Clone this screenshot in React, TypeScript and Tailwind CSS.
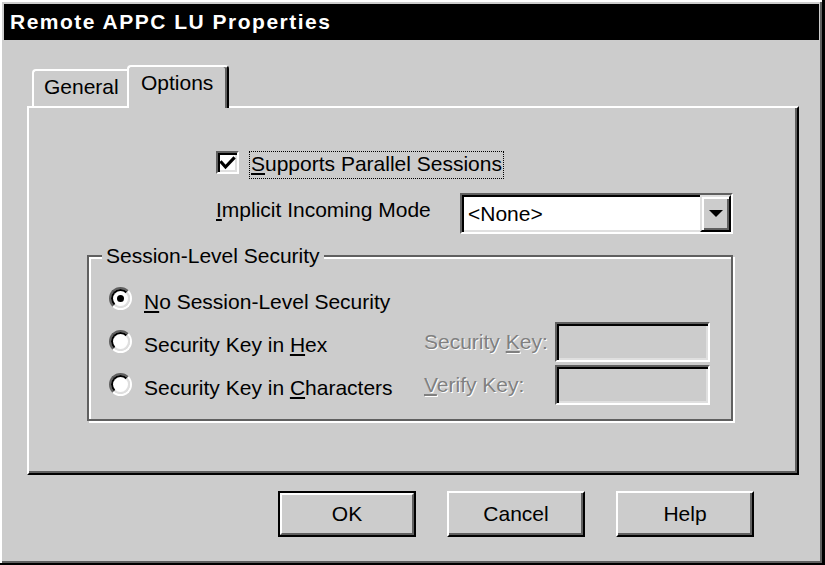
import React from "react";

const sunken =
  "border-2 border-t-[#606060] border-l-[#606060] border-b-white border-r-white shadow-[inset_2px_2px_0_#000,inset_-2px_-2px_0_#dfdfdf]";

function Radio({ checked }: { checked?: boolean }) {
  return (
    <div className="w-[23px] h-[23px] shrink-0 rounded-full border-2 border-t-[#606060] border-l-[#606060] border-b-white border-r-white">
      <div className="w-full h-full rounded-full bg-white border-2 border-t-black border-l-black border-b-[#dfdfdf] border-r-[#dfdfdf] flex items-center justify-center">
        {checked && <div className="w-[7px] h-[7px] rounded-full bg-black" />}
      </div>
    </div>
  );
}

function KeyField({ label, u, rest }: { label?: string; u: string; rest: string }) {
  return (
    <div className="flex items-center">
      <div className="w-[131px] text-[#808080] [text-shadow:1px_1px_0_#fff] leading-[24px]">
        {label}
        <u>{u}</u>
        {rest}
      </div>
      <div className={`w-[155px] h-[40px] bg-[#cccccc] ${sunken}`} />
    </div>
  );
}

function PushButton({ children, isDefault }: { children: React.ReactNode; isDefault?: boolean }) {
  if (isDefault) {
    return (
      <div className="w-[138px] h-[46px] border-2 border-black">
        <div className="w-full h-full border-2 border-t-white border-l-white border-b-[#606060] border-r-[#606060] flex items-center justify-center">
          {children}
        </div>
      </div>
    );
  }
  return (
    <div className="w-[138px] h-[46px] border-2 border-t-white border-l-white border-b-black border-r-black shadow-[inset_-2px_-2px_0_#606060] flex items-center justify-center">
      {children}
    </div>
  );
}

export default function App() {
  return (
    <div className="flex flex-col w-[825px] h-[565px] bg-[#cccccc] pt-[4px] pl-[4px] pr-[6px] pb-[4px] shadow-[inset_-3px_-2px_0_#000,inset_2px_2px_0_#fff,inset_-5px_-4px_0_#606060] text-black text-[21px] [font-family:'Liberation_Sans',Arial,sans-serif] select-none">
      {/* Title bar */}
      <div className="h-[36px] shrink-0 bg-black text-white font-bold tracking-[1.5px] pl-[6px] flex items-center">
        Remote APPC LU Properties
      </div>

      <div className="flex flex-col pl-[23px] pt-[25px]">
        {/* Tabs */}
        <div className="flex items-end h-[43px] pl-[5px] -mb-[2px] relative z-10">
          <div className="h-[37px] mb-[2px] w-[95px] border-l-2 border-t-2 border-white rounded-tl-[4px] pl-[10px] pt-[4px] leading-[24px]">
            General
          </div>
          <div className="h-[43px] w-[102px] bg-[#cccccc] border-l-2 border-t-2 border-white border-r-2 border-r-black rounded-t-[4px] shadow-[inset_-2px_0_0_#606060] pl-[12px] pt-[4px] leading-[24px]">
            Options
          </div>
        </div>

        {/* Panel */}
        <div className="w-[772px] h-[369px] border-2 border-t-white border-l-white border-b-black border-r-black shadow-[inset_-2px_-2px_0_#606060] flex flex-col">
          <div className="flex items-start mt-[43px] ml-[187px]">
            <div className="w-[23px] h-[23px] bg-white border-2 border-t-[#606060] border-l-[#606060] border-b-white border-r-white shadow-[inset_2px_2px_0_#000,inset_-2px_-2px_0_#dfdfdf]">
              <svg width="19" height="19" viewBox="0 0 19 19" className="block">
                <polyline points="3.5,9.5 7.5,14 15.5,5.5" fill="none" stroke="#000" strokeWidth="3.2" strokeLinecap="square" />
              </svg>
            </div>
            <div className="ml-[10px] h-[28px] border border-dotted border-black pl-[1px] pr-[1px] leading-[24px]">
              <u>S</u>upports Parallel Sessions
            </div>
          </div>

          <div className="flex items-start mt-[14px] ml-[187px]">
            <div className="w-[244px] mt-[5px] leading-[24px]">
              <u>I</u>mplicit Incoming Mode
            </div>
            <div className={`w-[273px] h-[41px] bg-white flex ${sunken}`}>
              <div className="flex-1 flex items-center pl-[6px] pt-[1px] leading-[24px]">&lt;None&gt;</div>
              <div className="w-[31px] h-full bg-[#cccccc] border-2 border-t-[#dfdfdf] border-l-[#dfdfdf] border-b-black border-r-black shadow-[inset_2px_2px_0_#fff,inset_-2px_-2px_0_#606060] flex items-center justify-center">
                <svg width="14" height="7" viewBox="0 0 14 7" className="block">
                  <polygon points="0,0 14,0 7,7" fill="#000" />
                </svg>
              </div>
            </div>
          </div>

          {/* Group box */}
          <div className="relative mt-[21px] ml-[58px] w-[646px] h-[166px] border-2 border-[#606060] shadow-[inset_2px_2px_0_#fff,2px_2px_0_#fff] pt-[20px] pl-[20px]">
            <div className="absolute -top-[13px] left-[13px] px-[4px] bg-[#cccccc] leading-[24px]">
              Session-Level Security
            </div>
            <div className="flex items-center h-[43px]">
              <Radio checked />
              <div className="ml-[12px] mt-[6px] leading-[24px]">
                <u>N</u>o Session-Level Security
              </div>
            </div>
            <div className="flex items-center h-[43px]">
              <Radio />
              <div className="ml-[12px] mt-[6px] w-[280px] leading-[24px]">
                Security Key in <u>H</u>ex
              </div>
              <KeyField label="Security " u="K" rest="ey:" />
            </div>
            <div className="flex items-center h-[43px]">
              <Radio />
              <div className="ml-[12px] mt-[6px] w-[280px] leading-[24px]">
                Security Key in <u>C</u>haracters
              </div>
              <KeyField u="V" rest="erify Key:" />
            </div>
          </div>
        </div>

        {/* Buttons */}
        <div className="flex mt-[16px] ml-[251px] gap-[31px]">
          <PushButton isDefault>OK</PushButton>
          <PushButton>Cancel</PushButton>
          <PushButton>Help</PushButton>
        </div>
      </div>
    </div>
  );
}
